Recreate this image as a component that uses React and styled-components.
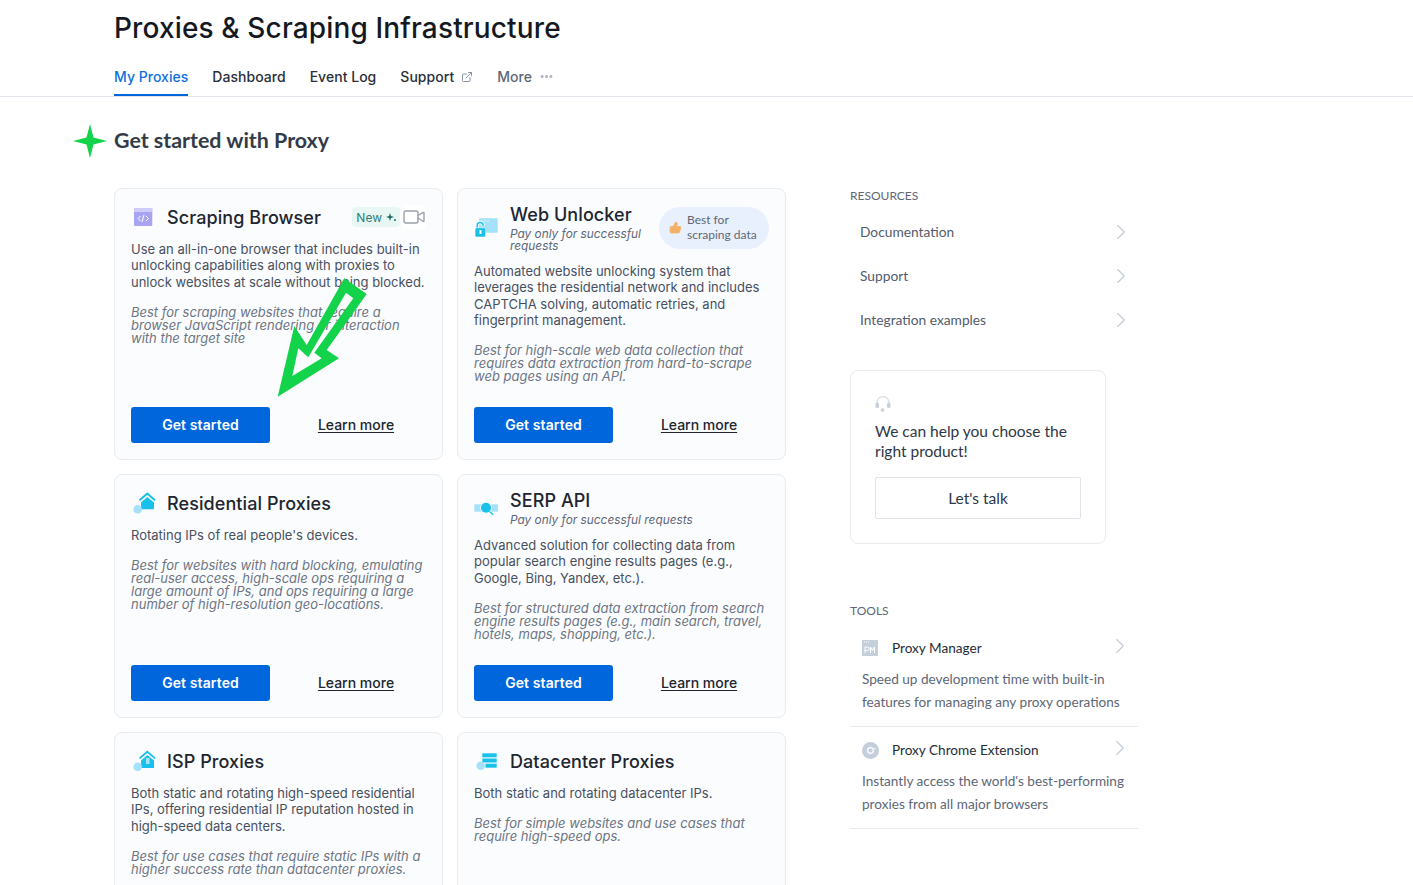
import React from 'react';
import styled, { createGlobalStyle } from 'styled-components';
import { ExternalLink, Ellipsis, Video, ChevronRight, ThumbsUp } from 'lucide-react';

const GlobalStyle = createGlobalStyle`
    html, body {
        margin: 0;
        height: 885px;
        overflow: hidden;
        background: #fff;
    }
    * { box-sizing: border-box; }
`;

const Page = styled.div`
    position: relative;
    height: 885px;
    overflow: hidden;
    font-family: Inter, "Liberation Sans", sans-serif;
    color: #1f2530;
`;

const Header = styled.header`
    height: 97px;
    padding: 11px 0 0 114px;
    border-bottom: 1px solid #dfe3ea;
`;

const Title = styled.h1`
    margin: 0;
    font-size: 28px;
    line-height: 34px;
    font-weight: 500;
    letter-spacing: 0.14px;
    color: #15191f;
`;

const Tabs = styled.nav`
    display: flex;
    gap: 24px;
    margin-top: 13px;
`;

const Tab = styled.a`
    display: flex;
    align-items: center;
    gap: 7px;
    height: 38px;
    padding-top: 1px;
    font-size: 14px;
    font-weight: 500;
    letter-spacing: 0.03px;
    color: ${(p) => (p.$active ? '#0d6fe0' : p.$muted ? '#5d6776' : '#2a303a')};
    border-bottom: 2px solid ${(p) => (p.$active ? '#0066dc' : 'transparent')};
    svg { color: #8a93a2; }
`;

const MoreDots = styled.span`
    display: flex;
    svg { color: #aab1bd; }
`;

const Main = styled.main`
    padding-top: 30px;
`;

const Section = styled.div`
    display: flex;
    align-items: center;
    gap: 7px;
    padding-left: 73px;
    height: 28px;
`;

const SectionTitle = styled.h2`
    margin: 0 0 2px;
    font-family: Lato, "Liberation Sans", sans-serif;
    font-size: 21.4px;
    font-weight: 700;
    color: #333b48;
`;

const Columns = styled.div`
    display: flex;
    gap: 64px;
    margin-top: 33px;
    padding-left: 114px;
`;

const CardGrid = styled.div`
    display: grid;
    grid-template-columns: 329px 329px;
    grid-template-rows: 272px 244px 244px;
    gap: 14px;
`;

const Card = styled.article`
    display: flex;
    flex-direction: column;
    padding: 15px 16px 16px;
    background: #fbfcfe;
    border: 1px solid #e8ebf0;
    border-radius: 8px;
`;

const CardHead = styled.div`
    display: flex;
    align-items: center;
    min-height: 26px;
`;

const IconSlot = styled.div`
    display: flex;
    flex: 0 0 36px;
    align-items: center;
`;

const HeadText = styled.div`
    flex: 1;
    min-width: 0;
`;

const CardTitle = styled.h3`
    margin: 0;
    font-size: 18px;
    line-height: 21px;
    font-weight: 500;
    letter-spacing: 0.08px;
    color: #20252e;
`;

const CardSub = styled.div`
    margin-top: 3px;
    max-width: 140px;
    font-size: 11.85px;
    line-height: 12px;
    font-style: italic;
    color: #5d6776;
    white-space: ${(p) => (p.$wrap ? 'normal' : 'nowrap')};
`;

const NewTag = styled.span`
    display: flex;
    align-items: center;
    gap: 4px;
    height: 20px;
    padding: 0 4px;
    background: #e8f7f3;
    border-radius: 4px;
    font-size: 12px;
    color: #2f7f78;
`;

const VideoButton = styled.span`
    display: flex;
    margin-left: 2px;
    color: #9aa1ab;
    background: #fff;
    border-radius: 4px;
`;

const BestBadge = styled.div`
    display: flex;
    align-items: center;
    gap: 5px;
    flex: 0 0 110px;
    height: 42px;
    padding: 0 0 2px 10px;
    background: #e9f0fd;
    border-radius: 21px;
    font-family: Lato, "Liberation Sans", sans-serif;
    font-size: 12px;
    line-height: 15px;
    color: #5d6776;
    svg { color: #f2b266; fill: #f2b266; }
`;

const Body = styled.p`
    margin: 11px 0 0;
    font-size: 13px;
    line-height: 16.25px;
    color: #47505e;
`;

const Note = styled.p`
    margin: 16px 0 0;
    font-size: 13px;
    line-height: 13px;
    font-style: italic;
    color: #6c7583;
`;

const Actions = styled.div`
    display: flex;
    align-items: center;
    margin-top: auto;
`;

const PrimaryButton = styled.a`
    display: flex;
    align-items: center;
    justify-content: center;
    width: 139px;
    height: 36px;
    padding-bottom: 2px;
    background: #0066dc;
    border-radius: 3px;
    color: #fff;
    font-size: 14px;
    font-weight: 600;
    letter-spacing: 0.1px;
`;

const LearnMore = styled.a`
    flex: 1;
    padding: 0 0 2px 16px;
    text-align: center;
    font-size: 14px;
    font-weight: 500;
    color: #20252e;
    text-decoration: underline;
    text-underline-offset: 2px;
`;

const Sidebar = styled.aside`
    width: 288px;
    font-family: Lato, "Liberation Sans", sans-serif;
`;

const SideLabel = styled.div`
    font-size: 12px;
    line-height: 16px;
    color: #5d6776;
    margin-top: ${(p) => p.$top || 0}px;
`;

const LinkList = styled.div`
    margin-top: 6px;
`;

const LinkRow = styled.a`
    display: flex;
    align-items: center;
    justify-content: space-between;
    width: 284px;
    height: 44px;
    padding: 0 0 0 10px;
    font-size: 13.75px;
    color: #525c6c;
    svg { color: #c3cbd8; }
`;

const LinkText = styled.span`
    padding-bottom: 2px;
`;

const HelpCard = styled.div`
    width: 256px;
    height: 174px;
    margin-top: 28px;
    padding: 25px 24px 0;
    border: 1px solid #e8ebf0;
    border-radius: 8px;
`;

const HelpText = styled.div`
    margin-top: 9px;
    font-size: 15.5px;
    line-height: 20px;
    color: #2f3744;
`;

const TalkButton = styled.a`
    display: flex;
    align-items: center;
    justify-content: center;
    height: 42px;
    margin-top: 16px;
    border: 1px solid #dfe3ea;
    border-radius: 2px;
    font-size: 15.5px;
    color: #2f3744;
`;

const ToolList = styled.div`
    margin-top: 6px;
`;

const ToolItem = styled.div`
    padding: 12px 5px 0 12px;
    height: 102px;
    border-bottom: 1px solid #e6e9ee;
`;

const ToolHead = styled.div`
    display: flex;
    align-items: center;
    height: 22px;
    font-size: 13.6px;
    color: #262d38;
`;

const ToolIcon = styled.span`
    display: flex;
    flex: 0 0 30px;
`;

const ToolChevron = styled.span`
    display: flex;
    margin-left: auto;
    margin-top: -5px;
    color: #c3cbd8;
`;

const ToolDesc = styled.p`
    margin: 9px 0 0;
    font-size: 13.6px;
    line-height: 23px;
    color: #5d6776;
    white-space: nowrap;
`;

const ArrowMark = styled.svg`
    position: absolute;
    left: 270px;
    top: 272px;
    pointer-events: none;
`;

const BrowserIcon = () => (
    <svg width="22" height="18" viewBox="0 0 22 18">
        <rect x="3" y="0" width="18.300" height="18" rx="1" fill="#a8a4f2" />
        <rect x="3" y="0" width="18.300" height="4" fill="#cfcdf8" />
        <path d="M9.500 8l-2.500 2.500 2.500 2.500M15 8l2.500 2.500-2.500 2.500M13 7l-2 7" fill="none" stroke="#fff" strokeWidth="1" />
    </svg>
);

const UnlockerIcon = () => (
    <svg width="26" height="22" viewBox="0 0 26 22">
        <rect x="5" y="1.300" width="18.700" height="14.400" rx="1" fill="#a5e1fa" />
        <circle cx="8" cy="4" r=".7" fill="#fff" />
        <circle cx="11" cy="4" r=".7" fill="#fff" />
        <circle cx="14" cy="4" r=".7" fill="#fff" />
        <path d="M3.200 11V8.500a3 3 0 0 1 6 0" fill="none" stroke="#fbfcfe" strokeWidth="3.500" />
        <path d="M3.200 11V8.500a3 3 0 0 1 6 0" fill="none" stroke="#18c0ea" strokeWidth="1.500" />
        <rect x="1" y="10.700" width="10.700" height="9.300" rx="1.500" fill="#18c0ea" stroke="#fbfcfe" strokeWidth=".6" />
        <rect x="5.500" y="13" width="2" height="4" fill="#fff" />
    </svg>
);

const HomeIcon = () => (
    <svg width="25" height="24" viewBox="0 0 25 24">
        <path d="M8.500 9.200L16.300 2.600 24 9.200" fill="none" stroke="#18c0ea" strokeWidth="2" />
        <path d="M10 11.500l6.300-5.400 6.700 5.400V18.300H10z" fill="#18c0ea" />
        <circle cx="6.700" cy="18.300" r="4.300" fill="#a5e1fa" />
    </svg>
);

const SerpIcon = () => (
    <svg width="25" height="16" viewBox="0 0 25 16">
        <rect x="0.300" y="4.300" width="7" height="7.400" fill="#a5e1fa" />
        <rect x="17" y="4.300" width="7" height="7.400" fill="#a5e1fa" />
        <circle cx="12" cy="7.700" r="5.800" fill="#fbfcfe" />
        <circle cx="12" cy="7.700" r="5" fill="#18c0ea" />
        <path d="M15.500 11.500l3.800 3.300" stroke="#18c0ea" strokeWidth="1.300" />
    </svg>
);

const IspIcon = () => (
    <svg width="25" height="24" viewBox="0 0 25 24">
        <path d="M8.500 9.400L16.300 2.700 24.200 9.400" fill="none" stroke="#18c0ea" strokeWidth="1.800" />
        <path d="M10 11.500l6.300-5.400 6.700 5.400V19H10z" fill="#18c0ea" />
        <rect x="15" y="9" width="3.500" height="6" fill="#a5e1fa" />
        <circle cx="6.700" cy="17.700" r="4.300" fill="#a5e1fa" />
    </svg>
);

const DatacenterIcon = () => (
    <svg width="24" height="20" viewBox="0 0 24 20">
        <rect x="8.300" y="2.300" width="14.400" height="4" fill="#18c0ea" />
        <rect x="8.300" y="7.500" width="14.400" height="4" fill="#18c0ea" />
        <rect x="11.500" y="12.700" width="11.200" height="4" fill="#18c0ea" />
        <circle cx="6.700" cy="14.700" r="4.300" fill="#a5e1fa" />
    </svg>
);

const Sparkle = () => (
    <svg width="10" height="10" viewBox="0 0 10 10">
        <path d="M4 1l1 3 3 1-3 1-1 3-1-3-3-1 3-1z" fill="#1e6f68" />
        <circle cx="9" cy="8" r="1" fill="#1e6f68" />
    </svg>
);

const HeadsetIcon = () => (
    <svg width="16" height="16" viewBox="0 0 16 16" style={{ display: 'block' }}>
        <path d="M2 8V6.500a6 6 0 0 1 12 0V8" fill="none" stroke="#dde2e9" strokeWidth="1.300" />
        <rect x="0.500" y="6.500" width="3.500" height="5.500" rx="1.500" fill="#c8d0db" />
        <rect x="12" y="6.500" width="3.500" height="5.500" rx="1.500" fill="#c8d0db" />
        <circle cx="7.500" cy="14" r="1.800" fill="#c8d0db" />
    </svg>
);

const PmIcon = () => (
    <svg width="16" height="16" viewBox="0 0 16 16">
        <rect width="16" height="16" fill="#c5cfdc" />
        <path d="M2 2h1M4 2h1M6 2h1" stroke="#fff" strokeWidth="1" />
        <path d="M3 13V7h2.500a1.500 1.500 0 0 1 0 3.500H3M8.500 13V7l2 3.500 2-3.500v6" fill="none" stroke="#fff" strokeWidth="1" />
    </svg>
);

const ChromeIcon = () => (
    <svg width="17" height="17" viewBox="0 0 17 17">
        <circle cx="8.500" cy="8.500" r="8.500" fill="#c5cfdc" />
        <path d="M5 6.500h9M8 12.500l4-6" stroke="#e7ebf1" strokeWidth="1" />
        <circle cx="8.500" cy="8.500" r="3.200" fill="#eef1f5" stroke="#fff" strokeWidth="1" />
        <circle cx="8.500" cy="8.500" r="2" fill="#c5cfdc" />
    </svg>
);

// the last two cards run past the bottom of the frame, their buttons are never seen
const products = [
    {
        title: 'Scraping Browser',
        Icon: BrowserIcon,
        isNew: true,
        actions: true,
        body: 'Use an all-in-one browser that includes built-in unlocking capabilities along with proxies to unlock websites at scale without being blocked.',
        note: 'Best for scraping websites that require a browser JavaScript rendering or interaction with the target site',
    },
    {
        title: 'Web Unlocker',
        Icon: UnlockerIcon,
        sub: 'Pay only for successful requests',
        wrapSub: true,
        best: true,
        actions: true,
        body: 'Automated website unlocking system that leverages the residential network and includes CAPTCHA solving, automatic retries, and fingerprint management.',
        note: 'Best for high-scale web data collection that requires data extraction from hard-to-scrape web pages using an API.',
    },
    {
        title: 'Residential Proxies',
        Icon: HomeIcon,
        actions: true,
        body: "Rotating IPs of real people's devices.",
        note: 'Best for websites with hard blocking, emulating real-user access, high-scale ops requiring a large amount of IPs, and ops requiring a large number of high-resolution geo-locations.',
    },
    {
        title: 'SERP API',
        Icon: SerpIcon,
        sub: 'Pay only for successful requests',
        actions: true,
        body: 'Advanced solution for collecting data from popular search engine results pages (e.g., Google, Bing, Yandex, etc.).',
        note: 'Best for structured data extraction from search engine results pages (e.g., main search, travel, hotels, maps, shopping, etc.).',
    },
    {
        title: 'ISP Proxies',
        Icon: IspIcon,
        body: 'Both static and rotating high-speed residential IPs, offering residential IP reputation hosted in high-speed data centers.',
        note: 'Best for use cases that require static IPs with a higher success rate than datacenter proxies.',
    },
    {
        title: 'Datacenter Proxies',
        Icon: DatacenterIcon,
        body: 'Both static and rotating datacenter IPs.',
        note: 'Best for simple websites and use cases that require high-speed ops.',
    },
];

const tools = [
    {
        name: 'Proxy Manager',
        Icon: PmIcon,
        lines: ['Speed up development time with built-in', 'features for managing any proxy operations'],
    },
    {
        name: 'Proxy Chrome Extension',
        Icon: ChromeIcon,
        lines: ["Instantly access the world's best-performing", 'proxies from all major browsers'],
    },
];

const ProductCard = ({ product }) => {
    const { title, Icon, isNew, sub, wrapSub, best, actions, body, note } = product;
    return (
        <Card>
            <CardHead>
                <IconSlot><Icon /></IconSlot>
                <HeadText>
                    <CardTitle>{title}</CardTitle>
                    {sub && <CardSub $wrap={wrapSub}>{sub}</CardSub>}
                </HeadText>
                {isNew && (
                    <>
                        <NewTag>New <Sparkle /></NewTag>
                        <VideoButton><Video size={24} strokeWidth={1.4} /></VideoButton>
                    </>
                )}
                {best && (
                    <BestBadge>
                        <ThumbsUp size={13} strokeWidth={1.5} />
                        <span>Best for<br />scraping data</span>
                    </BestBadge>
                )}
            </CardHead>
            <Body>{body}</Body>
            <Note>{note}</Note>
            {actions && (
                <Actions>
                    <PrimaryButton>Get started</PrimaryButton>
                    <LearnMore>Learn more</LearnMore>
                </Actions>
            )}
        </Card>
    );
};

const App = () => {
    return (
        <Page>
            <GlobalStyle />
            <Header>
                <Title>Proxies &amp; Scraping Infrastructure</Title>
                <Tabs>
                    <Tab $active>My Proxies</Tab>
                    <Tab>Dashboard</Tab>
                    <Tab>Event Log</Tab>
                    <Tab>Support <ExternalLink size={12} /></Tab>
                    <Tab $muted>More <MoreDots><Ellipsis size={15} strokeWidth={3} /></MoreDots></Tab>
                </Tabs>
            </Header>
            <Main>
                <Section>
                    <svg width="34" height="34" viewBox="0 0 34 34">
                        <path d="M17 0L20.500 13.500 34 17 20.500 20.500 17 34 13.500 20.500 0 17 13.500 13.500Z" fill="#12d34a" />
                    </svg>
                    <SectionTitle>Get started with Proxy</SectionTitle>
                </Section>
                <Columns>
                    <CardGrid>
                        {products.map((p) => <ProductCard key={p.title} product={p} />)}
                    </CardGrid>
                    <Sidebar>
                        <SideLabel>RESOURCES</SideLabel>
                        <LinkList>
                            {['Documentation', 'Support', 'Integration examples'].map((label) => (
                                <LinkRow key={label}>
                                    <LinkText>{label}</LinkText>
                                    <ChevronRight size={26} strokeWidth={1} />
                                </LinkRow>
                            ))}
                        </LinkList>
                        <HelpCard>
                            <HeadsetIcon />
                            <HelpText>We can help you choose the right product!</HelpText>
                            <TalkButton>Let's talk</TalkButton>
                        </HelpCard>
                        <SideLabel $top={59}>TOOLS</SideLabel>
                        <ToolList>
                            {tools.map(({ name, Icon, lines }) => (
                                <ToolItem key={name}>
                                    <ToolHead>
                                        <ToolIcon><Icon /></ToolIcon>
                                        {name}
                                        <ToolChevron><ChevronRight size={26} strokeWidth={1} /></ToolChevron>
                                    </ToolHead>
                                    <ToolDesc>{lines[0]}<br />{lines[1]}</ToolDesc>
                                </ToolItem>
                            ))}
                        </ToolList>
                    </Sidebar>
                </Columns>
            </Main>
            <ArrowMark width="100" height="130" viewBox="0 0 100 130">
                <path
                    fillRule="evenodd"
                    fill="#12d34a"
                    d="M7.700 124.700L24.300 54L36.700 73L74.300 6.300L96.700 22L56.700 78L69 86.300ZM22.300 104L51.700 86.300L44.300 80.700L83.300 26.300L76 20.700L38.300 85.300L28.300 76.300Z"
                />
            </ArrowMark>
        </Page>
    );
};

export default App;
